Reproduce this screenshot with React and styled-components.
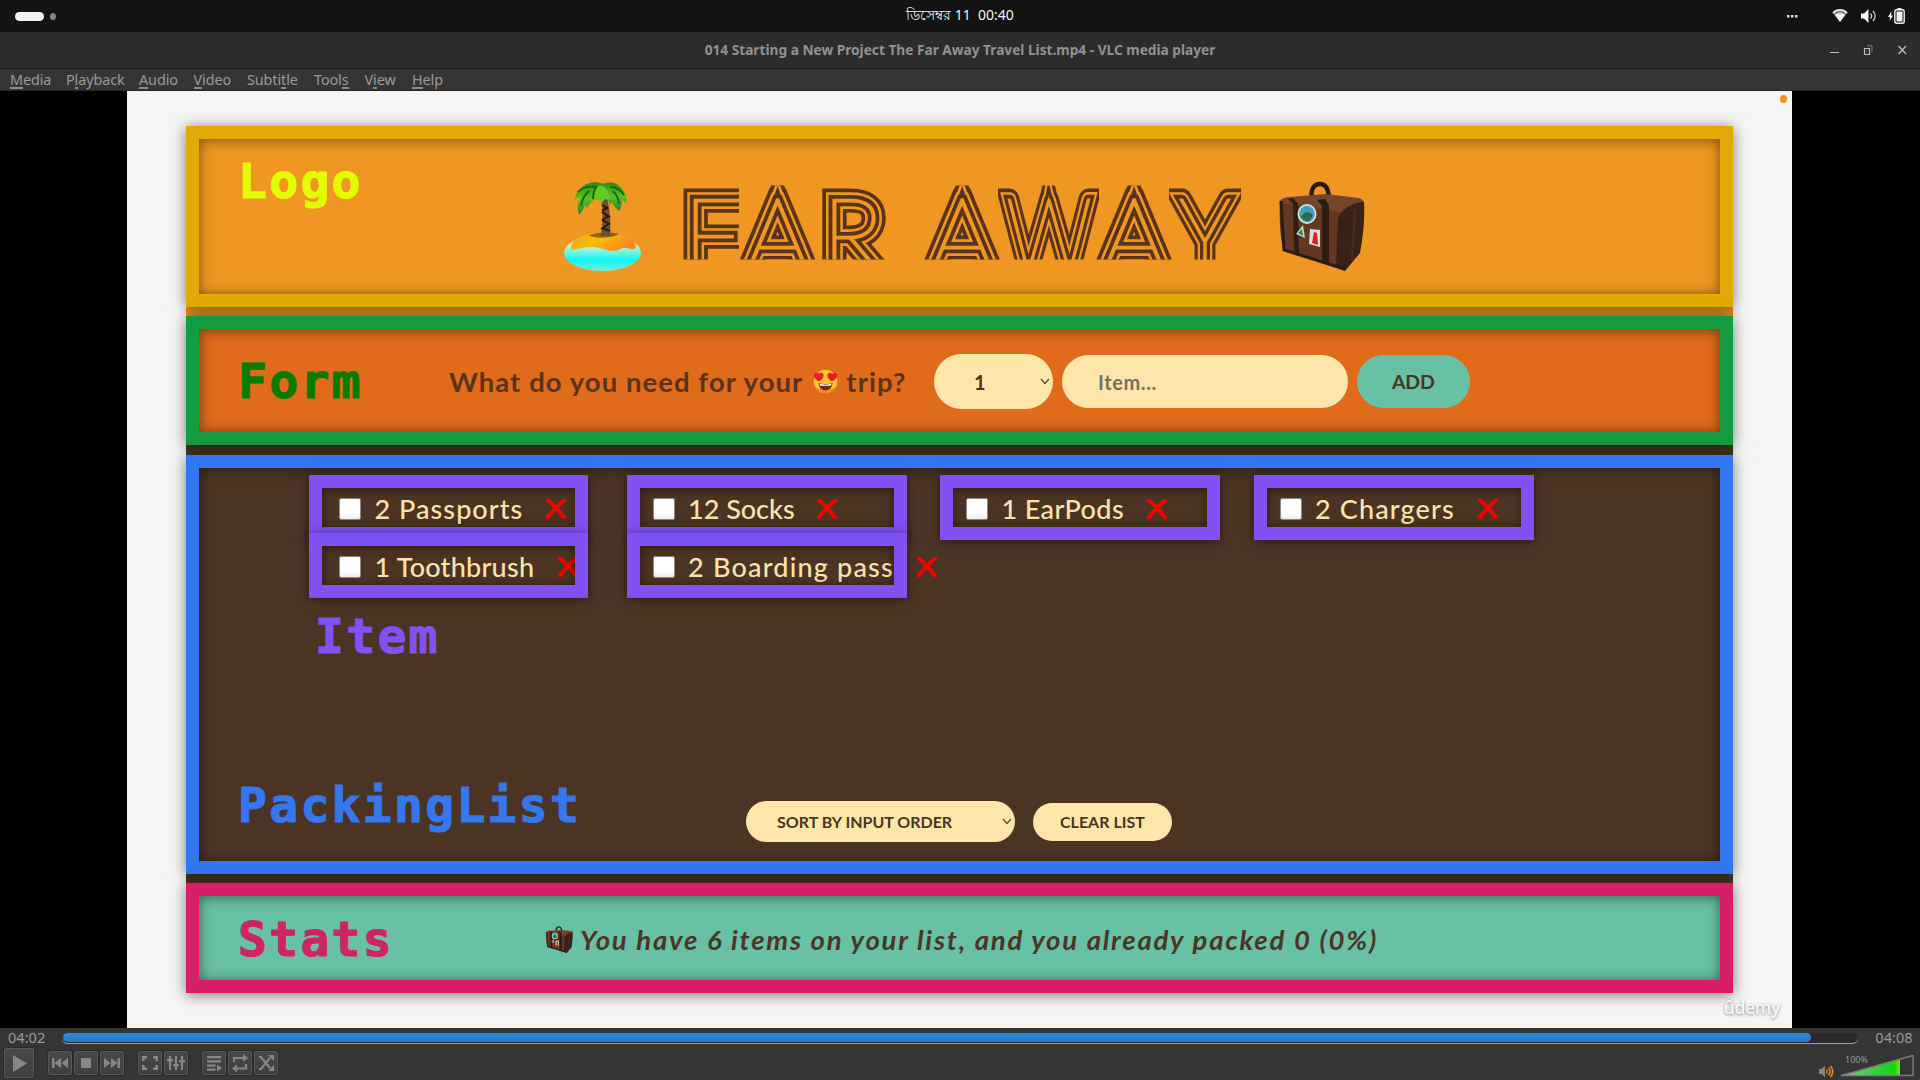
import React from "react";
import styled, { createGlobalStyle } from "styled-components";

const brown = "#4c3424";
const cream = "#fee6aa";

const Global = createGlobalStyle`
  * { box-sizing: border-box; }
  html, body { margin: 0; padding: 0; background: #000; overflow: hidden; }
  svg { display: block; flex: none; }
`;

const Screen = styled.div`
  width: 1920px;
  height: 1080px;
  display: flex;
  flex-direction: column;
  overflow: hidden;
  font-family: "Noto Sans", "Open Sans", sans-serif;
`;

/* ---------- desktop bars ---------- */

const BarGrid = styled.header`
  display: grid;
  grid-template-columns: 1fr auto 1fr;
  align-items: center;
`;

const TopBar = styled(BarGrid)`
  flex: 0 0 32px;
  padding: 0 15px;
  background: #131313;
  color: #f2f2f2;
  font-size: 14px;
`;

const Workspaces = styled.div`
  display: flex;
  align-items: center;
  gap: 6px;
`;

const Pill = styled.i`
  width: 29px;
  height: 9px;
  border-radius: 5px;
  background: #f2f2f2;
`;

const Dot = styled.i`
  width: 6px;
  height: 7px;
  border-radius: 50%;
  background: #858585;
`;

const Clock = styled.div`
  white-space: pre;
  line-height: 20px;
  padding-bottom: 2px;
`;

const Tray = styled.div`
  display: flex;
  align-items: center;
  justify-content: flex-end;
`;

const TrayItem = styled.span`
  margin-left: ${(p) => p.$gap || 0}px;
`;

const TitleBar = styled(BarGrid)`
  flex: 0 0 37px;
  padding: 0 13px;
  background: #2c2c2c;
  border-bottom: 1px solid #191919;
  color: #929292;
`;

const Title = styled.h1`
  grid-column: 2;
  margin: 0;
  font-size: 13.7px;
  line-height: 20px;
  font-weight: 700;
  white-space: nowrap;
`;

const MenuBar = styled.nav`
  flex: 0 0 22px;
  display: flex;
  padding-left: 10px;
  background: #353535;
  border-bottom: 1px solid #262626;
  color: #9a9a9a;
  font-size: 14.4px;
  line-height: 21px;
  letter-spacing: -0.1px;
`;

const MenuItem = styled.span`
  flex: 0 0 ${(p) => p.$w}px;
  white-space: nowrap;
  u {
    text-decoration: none;
    box-shadow: inset 0 -2px 0 #8d8d8d;
    display: inline-block;
    height: 20px;
  }
`;

/* ---------- video picture ---------- */

const Video = styled.main`
  flex: 0 0 937px;
  background: #000;
  display: flex;
  justify-content: center;
  padding-right: 1px;
`;

const Slide = styled.div`
  position: relative;
  width: 1665px;
  background: #f5f5f5;
  padding: 35px 59px 0;
  font-family: Lato, "Open Sans", sans-serif;
`;

const OrangeDot = styled.i`
  position: absolute;
  top: 4px;
  right: 5px;
  width: 7px;
  height: 8px;
  border-radius: 50%;
  background: #f59518;
`;

const Watermark = styled.div`
  position: absolute;
  right: 12px;
  bottom: 9px;
  font: 600 17.5px/24px "Open Sans", sans-serif;
  letter-spacing: -0.4px;
  color: #f8f8f8;
  text-shadow: 0 1px 3px rgba(0, 0, 0, 0.45);
`;

const AppBoard = styled.div`
  width: 1547px;
  display: flex;
  flex-direction: column;
  gap: 9px;
  background: linear-gradient(#ef9722 0 195px, ${brown} 195px);
`;

const Section = styled.section`
  position: relative;
  height: ${(p) => p.$h}px;
  margin-bottom: ${(p) => p.$mb || 0}px;
  border: 13px solid ${(p) => p.$line};
  background: ${(p) => p.$bg};
  box-shadow: 0 2px 14px rgba(0, 0, 0, 0.5), inset 0 1px 13px rgba(0, 0, 0, 0.5);
  display: flex;
  flex-direction: ${(p) => (p.$column ? "column" : "row")};
  align-items: ${(p) => (p.$column ? "stretch" : "center")};
  padding-top: ${(p) => p.$pt || 0}px;
  padding-left: ${(p) => (p.$column ? 0 : 39)}px;
`;

const Tag = styled.h2`
  margin: ${(p) => p.$m || "0"};
  flex: 0 0 auto;
  width: ${(p) => p.$w}px;
  align-self: ${(p) => p.$align || "auto"};
  font: 700 48px/56px "DejaVu Sans Mono", monospace;
  letter-spacing: 2.3px;
  color: ${(p) => p.$color};
  -webkit-text-stroke: 1.1px ${(p) => p.$color};
`;

const Brand = styled.div`
  display: flex;
  align-items: center;
  margin-top: 19px;
`;

/* Inline-striped display lettering: concentric strokes over a hairline glyph. */
const Wordmark = styled.div`
  display: flex;
  margin: -7px 40px 0 42px;
  font: 100 104px/93px Lato, sans-serif;
  color: #59341a;
`;

const Glyph = styled.span`
  display: block;
  width: 100%;
  -webkit-text-stroke: 23px #59341a;
  &::after {
    content: attr(data-c);
    position: absolute;
    inset: 0;
    z-index: 1;
    color: #ef9722;
    -webkit-text-stroke: 15.6px #ef9722;
  }
`;

const Letter = styled.span`
  position: relative;
  display: flex;
  justify-content: center;
  text-align: center;
  height: 74px;
  width: ${(p) => p.$w}px;
  margin-left: ${(p) => p.$ml || 0}px;
  clip-path: inset(0 ${(p) => p.$cut ?? -14}px 0 -14px);
  white-space: nowrap;
  text-indent: ${(p) => p.$nudge || 0}px;
  transform: scaleX(${(p) => p.$sx || 1});
  &::before,
  &::after {
    content: attr(data-c);
    position: absolute;
    inset: 0;
  }
  &::before {
    z-index: 2;
    -webkit-text-stroke: 10.4px #59341a;
  }
  &::after {
    z-index: 3;
    color: #ef9722;
    -webkit-text-stroke: 2.8px #ef9722;
  }
`;

const Question = styled.div`
  display: flex;
  align-items: center;
  width: 485px;
  color: #5a3419;
  font-size: 27.5px;
  font-weight: 700;
  letter-spacing: 1.05px;
  white-space: nowrap;
  svg { margin: 0 8px 0 10px; }
`;

const Control = styled.div`
  display: flex;
  align-items: center;
  justify-content: space-between;
  width: ${(p) => p.$w}px;
  height: ${(p) => p.$h}px;
  margin-left: ${(p) => p.$ml || 0}px;
  padding: 0 ${(p) => p.$pr || 0}px 0 ${(p) => p.$pl || 0}px;
  border-radius: ${(p) => p.$h / 2}px;
  background: ${(p) => p.$bg || cream};
  color: ${(p) => p.$color || brown};
  font-size: ${(p) => p.$size}px;
  font-weight: 700;
  letter-spacing: ${(p) => p.$ls || 0}px;
  white-space: nowrap;
`;

const Items = styled.ul`
  list-style: none;
  margin: 7px 0 0 110px;
  padding: 0;
  display: grid;
  grid-template-columns: 317.5px 313.5px 313.5px 280px;
  grid-auto-rows: 58px;
`;

const Item = styled.li`
  position: relative;
  width: 280px;
  height: 65px;
  padding: 3px 0 0 26px;
  &:nth-child(4n + 1) {
    width: 279px;
    padding-left: 30px;
  }
  display: flex;
  align-items: center;
  color: #fbe3ac;
  font-size: 27px;
  font-weight: 500;
  letter-spacing: ${(p) => p.$ls}px;
  white-space: nowrap;
  &::after {
    content: "";
    position: absolute;
    inset: 0;
    border: 13px solid #7f52f4;
    box-shadow: 0 1px 10px rgba(0, 0, 0, 0.5), inset 0 1px 10px rgba(0, 0, 0, 0.5);
  }
`;

const Box = styled.i`
  flex: 0 0 22px;
  height: 22px;
  margin-right: 13.5px;
  border: 1px solid #8c8a88;
  border-radius: 2px;
  background: linear-gradient(#fff, #fff 70%, #ececec);
`;

const Name = styled.span`
  flex: 0 0 ${(p) => p.$w}px;
  margin: -2px 22px 0 0;
`;

const Footer = styled.div`
  margin-top: auto;
  height: 84.5px;
  display: flex;
  align-items: flex-start;
  padding-left: 39px;
`;

const Actions = styled.div`
  display: flex;
  align-items: center;
  margin-top: 24.5px;
`;

const Summary = styled.div`
  display: flex;
  align-items: center;
  gap: 7px;
  color: #4a3626;
  font-size: 27.5px;
  font-style: italic;
  font-weight: 700;
  letter-spacing: 1.77px;
  white-space: nowrap;
`;

/* ---------- player controls ---------- */

const Player = styled.footer`
  flex: 1;
  background: #353535;
  color: #9b9b9b;
  display: flex;
  flex-direction: column;
`;

const SeekRow = styled.div`
  height: 19px;
  display: flex;
  align-items: center;
  justify-content: space-between;
  padding: 0 9px 0 8px;
  font-size: 14.6px;
  line-height: 19px;
`;

const Groove = styled.div`
  width: 1796px;
  height: 10px;
  margin: 0 17px;
  flex: none;
  border-radius: 5px;
  background: #2a2a2a;
  box-shadow: 0 1px 0 #a0a0a0;
`;

const Fill = styled.div`
  width: 1748px;
  height: 9px;
  margin-left: 1px;
  border-radius: 5px;
  background: linear-gradient(#2f8ade, #2378c9);
`;

const Buttons = styled.div`
  display: flex;
  align-items: center;
  padding: 1px 6px 1px 4px;
  height: 32px;
`;

const Key = styled.span`
  width: ${(p) => (p.$big ? 30 : 24)}px;
  height: ${(p) => (p.$big ? 30 : 24)}px;
  margin-left: ${(p) => p.$ml ?? 2}px;
  display: flex;
  align-items: center;
  justify-content: center;
  border: 1px solid #575757;
  border-radius: 2px;
  box-shadow: 0 0 0 1px #2a2a2a;
  background: linear-gradient(#484848, #3f3f3f);
`;

const Volume = styled.div`
  display: flex;
  align-items: flex-end;
  align-self: flex-end;
  margin-left: auto;
  height: 24px;
`;

const VolumeMeter = styled.div`
  position: relative;
  width: 74px;
  height: 24px;
  margin: 0 0 1px 6px;
`;

const Percent = styled.span`
  position: absolute;
  left: 5px;
  top: 1px;
  font-size: 9px;
  line-height: 12px;
`;

/* ---------- drawings ---------- */

const Palm = () => (
  <svg width="78" height="91" viewBox="0 0 78 91">
    <defs>
      <linearGradient id="sea" x1="0" y1="0" x2="0" y2="1">
        <stop offset="0" stopColor="#fff" />
        <stop offset=".35" stopColor="#a9f5d6" />
        <stop offset=".7" stopColor="#0ff6f8" />
        <stop offset="1" stopColor="#7fe8d8" />
      </linearGradient>
      <linearGradient id="sand" x1="0" y1="0" x2="1" y2=".4">
        <stop offset="0" stopColor="#f0a81b" />
        <stop offset=".5" stopColor="#fbb908" />
        <stop offset="1" stopColor="#f58a24" />
      </linearGradient>
      <linearGradient id="leafA" x1="0" y1="0" x2="0" y2="1">
        <stop offset="0" stopColor="#2f8a12" />
        <stop offset=".5" stopColor="#58c41c" />
        <stop offset="1" stopColor="#2b7a3c" />
      </linearGradient>
    </defs>
    <ellipse cx="38.500" cy="72" rx="38.500" ry="18" fill="url(#sea)" />
    <path d="M7 67C8 55 24 52 39 52s31 3 33 14c-2 4-5 2-9 1-5-1-8 3-14 3-8 0-12-4-20-4-9-.500-12 1-16 2-4 1-6 1-6-1Z" fill="url(#sand)" />
    <path d="M25 54.500c6-3 20-4 30-1.500-6 4-24 5-30 1.500Z" fill="#6b4a10" opacity=".75" />
    <path d="M37 17h6c3 12 4 24 3 38h-9c2-13 2-26 0-38Z" fill="#6e4c33" />
    <path d="m38 24 6 4m-6 3 8 5m-8 3 8 4m-8 4 8 3m-2-24-6 4m7 5-7 4m7 4-8 5" stroke="#23150b" strokeWidth="1.600" fill="none" />
    <path d="M39 3C29-2 13 3 10 20c3-3 5-4 7-4-4 5-4 11-2 18 3-3 5-7 6-10l2 3c3-6 8-8 12-13 2-4 4-7 4-11Z" fill="url(#leafA)" />
    <path d="M38 3c12-5 24 2 25 19-2-1-3-2-5-3 0 5-1 8-3 11-3-3-6-6-7-9l-2 3c-2-6-6-10-8-21Z" fill="url(#leafA)" />
    <path d="M34 5c7-2 12 5 11 14l-4-1-3 4-3-3-4 0c-2-5-1-11 3-14Z" fill="#63cb24" />
    <path d="M14 11c6-6 13-6 19-5M46 6c6 0 11 3 14 8M25 10c-5 4-7 9-8 15M49 10c4 4 6 8 6 13M33 5c-3 4-4 9-4 13" stroke="#17650f" strokeWidth="1.800" fill="none" />
  </svg>
);

const Suitcase = ({ w = 86, h = 90 }) => (
  <svg width={w} height={h} viewBox="0 0 86 90" preserveAspectRatio="none">
    <path d="M33 20c-2-12 2-17 8-17s9 6 9 17" fill="none" stroke="#2b1a12" strokeWidth="4.500" />
    <path d="M1 20 62 30l4 60L4 69C1 54 0 36 1 20Z" fill="#633720" />
    <path d="M1 20c2-3 6-4 10-4l36-3 33 4c4 1 6 4 5 8L66 32 2 22Z" fill="#74452b" />
    <path d="M85 21c1 18-1 34-4 51L66 90l-9-4 2-48c2-10 16-17 26-17Z" fill="#3a2115" />
    <path d="m14 17 5 6 1 52-5-2-1-50-5-5Zm32 1 4 6v59l-7-3V25l-5-6Z" fill="#2f1c14" />
    <path d="m2 20 3 49 61 19" fill="none" stroke="#2c1a13" strokeWidth="3" />
    <path d="m76 28-3 52" stroke="#4b2a1b" strokeWidth="2.500" />
    <ellipse cx="28" cy="33" rx="9.500" ry="10" fill="#d7e6d2" />
    <ellipse cx="28" cy="33" rx="7.800" ry="8.300" fill="#3f9fc2" />
    <path d="M22 36c3-6 8-6 12-2l-3 6c-4 1-7-1-9-4Z" fill="#2f6a4a" />
    <path d="m24 44 2 13-9-4Z" fill="#b9dcc2" />
    <path d="m23 48 1 7-5-3Z" fill="#1f8a4f" />
    <path d="m31 48 10 1v17l-11-3Z" fill="#d9dfdf" />
    <path d="m35 51 3 1 1 12-6-2Z" fill="#cf2327" />
  </svg>
);

const HeartEyes = () => (
  <svg width="25" height="25" viewBox="0 0 25 25">
    <circle cx="12.500" cy="12.500" r="11.800" fill="#fdc42c" />
    <path d="M1.500 16.500a11.800 11.800 0 0 0 22 0c-3 6-19 6-22 0Z" fill="#f08f16" />
    <path d="M5.500 14c4 1.500 10 1.500 14 0-.6 4.800-3 7.300-7 7.300s-6.400-2.500-7-7.300Z" fill="#7a2a12" />
    <path d="M6.400 14.800c4 1.100 8.200 1.100 12.200 0l-.5 2H6.900Z" fill="#fff" />
    <path d="M6 12.500C2 10.500.2 8 .8 5.600 1.500 3.300 4.300 3 5.600 5c1.700-2.200 5-1.500 5 1.200 0 2.500-2 4.800-4.600 6.300Z" fill="#ea1c24" />
    <path d="M19 12.500c4-2 5.800-4.500 5.200-6.900-.7-2.300-3.500-2.600-4.800-.6-1.700-2.200-5-1.500-5 1.200 0 2.500 2 4.800 4.600 6.300Z" fill="#ea1c24" />
  </svg>
);

const Cross = () => (
  <svg width="20" height="20" viewBox="0 0 20 20">
    <path d="M2 1.500C7 5.500 13 12 18 18.500M18 1.500C13 6 6 13 1.800 18.500" stroke="#f90000" strokeWidth="3.900" strokeLinecap="round" fill="none" />
  </svg>
);

const Chevron = () => (
  <svg width="10" height="7" viewBox="0 0 10 7">
    <path d="m1 1 4 4.500L9 1" fill="none" stroke="#5e4a30" strokeWidth="1.300" />
  </svg>
);

const glyphs = {
  play: <path d="M8 6v17l14-8.500Z" />,
  prev: <path d="M3 6h2.500v10H3ZM12 6v10l-6.500-5ZM19 6v10l-6.500-5Z" />,
  stop: <path d="M6 6h10v10H6Z" />,
  next: <path d="M19 6h-2.500v10H19ZM10 6v10l6.500-5ZM3 6v10l6.500-5Z" />,
  full: <path d="M3 4h5v2.500H5.500V9H3ZM14 4h5v5h-2.500V6.500H14ZM3 13h2.500v2.500H8V18H3ZM16.500 13H19v5h-5v-2.500h2.500Z" />,
  ext: <path d="M4 4h2v3h2v2.500H6V18H4V9.500H2V7h2ZM10 4h2v8h2v2.500h-2V18h-2v-3.500H8V12h2ZM16 4h2v4h2v2.500h-2V18h-2v-7.500h-2V8h2Z" />,
  list: <path d="M4 4h14v2.200H4ZM4 8.300h14v2.200H4ZM4 12.500h8.500v2.200H4ZM4 16.600h8.500v2.200H4ZM14 12.500v7l5-3.500Z" />,
};

const KeyIcon = ({ name, size = 22 }) => (
  <svg width={size} height={size} viewBox={`0 0 ${size} ${size}`} fill="#878787">
    {glyphs[name]}
  </svg>
);

const LineIcon = ({ d, heads }) => (
  <svg width="22" height="22" viewBox="0 0 22 22" fill="none" stroke="#878787" strokeWidth="2.200">
    <path d={d} />
    <path d={heads} fill="#878787" stroke="none" />
  </svg>
);

const menu = [
  ["", "M", "edia", 56], ["P", "l", "ayback", 73], ["", "A", "udio", 54.500], ["", "V", "ideo", 53.500],
  ["Subti", "t", "le", 67], ["Tool", "s", "", 50.500], ["V", "i", "ew", 47.500], ["", "H", "elp", 40],
];

const letters = [
  { c: "F", w: 54, cut: -1, nudge: -1 },
  { c: "A", w: 81, ml: -1 },
  { c: "R", w: 71, nudge: -2 },
  { c: "A", w: 82, ml: 32 },
  { c: "W", w: 102, ml: -6, sx: 0.82 },
  { c: "A", w: 82, ml: -6 },
  { c: "Y", w: 68, ml: -4, sx: 0.86 },
];

const items = [
  ["2 Passports", 149, 1.05], ["12 Socks", 107, 0], ["1 EarPods", 123.5, 0.4],
  ["2 Chargers", 140.5, 1.15], ["1 Toothbrush", 161, 0.25], ["2 Boarding pass", 206.5, 1.2],
];

export default function App() {
  return (
    <Screen>
      <Global />
      <TopBar>
        <Workspaces><Pill /><Dot /></Workspaces>
        <Clock>{"ডিসেম্বর 11  00:40"}</Clock>
        <Tray>
          <svg width="11" height="3" fill="#ddd"><path d="M0 0h2.500v2.500H0ZM4 0h2.500v2.500H4ZM8 0h2.500v2.500H8Z" /></svg>
          <TrayItem $gap={34}>
            <svg width="16" height="14" viewBox="0 0 16 14">
              <path d="M.8 4C5-.2 11-.2 15.200 4L8 13Z" fill="#8d8d8d" />
              <path d="M.8 4C5-.2 11-.2 15.200 4" fill="none" stroke="#f2f2f2" strokeWidth="1.500" />
              <path d="M3 6c3-2.500 7-2.500 10 0l-5 7Z" fill="#f4f4f4" />
            </svg>
          </TrayItem>
          <TrayItem $gap={13}>
            <svg width="15" height="14" viewBox="0 0 15 14" fill="none" stroke="#c8c8c8" strokeWidth="1.300">
              <path d="M0 4.500h3L7.500 0v14L3 9.500H0Z" fill="#f4f4f4" stroke="none" />
              <path d="M9.500 4.500c1.400 1.500 1.400 3.500 0 5M12 2c2.600 3 2.600 7 0 10" />
            </svg>
          </TrayItem>
          <TrayItem $gap={12}>
            <svg width="17" height="16" viewBox="0 0 17 16">
              <path d="M3.500 3 0 9h2l-.5 4L5 7.500H3Z" fill="#f2f2f2" />
              <path d="M9.500 0h4v2h-4Z" fill="#f2f2f2" />
              <rect x="6.800" y="1.800" width="9.400" height="13.400" rx="2" fill="none" stroke="#f2f2f2" strokeWidth="1.400" />
              <path d="M8.500 3.500h6v10h-6Z" fill="#f2f2f2" />
            </svg>
          </TrayItem>
        </Tray>
      </TopBar>

      <TitleBar>
        <Title>014 Starting a New Project The Far Away Travel List.mp4 - VLC media player</Title>
        <Tray>
          <svg width="77" height="10" viewBox="0 0 77 10" fill="none" stroke="#bdbdbd">
            <path d="M0 7.500h9" />
            <path d="M34.500 3.500h5v6h-5Z" strokeWidth="1.200" />
            <path d="M37 .8h5v6.500" stroke="#858585" />
            <path d="m68.500 1 7.500 8M76 1l-7.500 8" strokeWidth="1.300" />
          </svg>
        </Tray>
      </TitleBar>

      <MenuBar>
        {menu.map(([a, k, b, w]) => (
          <MenuItem key={a + k + b} $w={w}>{a}<u>{k}</u>{b}</MenuItem>
        ))}
      </MenuBar>

      <Video>
        <Slide>
          <OrangeDot />
          <AppBoard>
            <Section $h={181} $line="#e2aa05" $bg="#ef9722">
              <Tag $w={326} $color="#e2ff00" $align="flex-start" $m="13.5px 0 0">Logo</Tag>
              <Brand>
                <Palm />
                <Wordmark>
                  {letters.map((l, i) => (
                    <Letter key={i} data-c={l.c} $w={l.w} $ml={l.ml} $sx={l.sx} $cut={l.cut} $nudge={l.nudge}>
                      <Glyph data-c={l.c}>{l.c}</Glyph>
                    </Letter>
                  ))}
                </Wordmark>
                <Suitcase />
              </Brand>
            </Section>

            <Section $h={129} $mb={1} $pt={2} $line="#159b42" $bg="#df6b1b">
              <Tag $w={211} $m="-2px 0 0" $color="#067c02">Form</Tag>
              <Question>
                What do you need for your <HeartEyes /> trip?
              </Question>
              <Control $w={119} $h={55} $size={20} $pl={40} $pr={3}>1<Chevron /></Control>
              <Control $w={286} $h={53} $ml={9} $size={20} $pl={36} $ls={0.6} $color="#77705f">Item...</Control>
              <Control $w={113} $h={53} $ml={9} $size={19.5} $pl={35} $ls={-0.2} $bg="#69c1a5">ADD</Control>
            </Section>

            <Section $h={419} $line="#3277f0" $bg={brown} $column>
              <Items>
                {items.map(([name, w, ls]) => (
                  <Item key={name} $ls={ls}>
                    <Box />
                    <Name $w={w}>{name}</Name>
                    <Cross />
                  </Item>
                ))}
              </Items>
              <Tag $color="#7f52f4" $m="17px 0 0 116px">Item</Tag>
              <Footer>
                <Tag $w={508} $color="#3577ee">PackingList</Tag>
                <Actions>
                  <Control $w={269} $h={41} $size={16} $pl={31} $pr={3}>SORT BY INPUT ORDER<Chevron /></Control>
                  <Control $w={139} $h={38} $ml={18} $size={16} $pl={27}>CLEAR LIST</Control>
                </Actions>
              </Footer>
            </Section>

            <Section $h={110} $pt={2} $line="#d81e69" $bg="#69c1a5">
              <Tag $w={308} $color="#cf2463">Stats</Tag>
              <Summary>
                <Suitcase w={27} h={27} />
                You have 6 items on your list, and you already packed 0 (0%)
              </Summary>
            </Section>
          </AppBoard>
          <Watermark>ûdemy</Watermark>
        </Slide>
      </Video>

      <Player>
        <SeekRow>
          <span>04:02</span>
          <Groove><Fill /></Groove>
          <span>04:08</span>
        </SeekRow>
        <Buttons>
          <Key $big $ml={0}><KeyIcon name="play" size={28} /></Key>
          <Key $ml={14}><KeyIcon name="prev" /></Key>
          <Key><KeyIcon name="stop" /></Key>
          <Key><KeyIcon name="next" /></Key>
          <Key $ml={14}><KeyIcon name="full" /></Key>
          <Key><KeyIcon name="ext" /></Key>
          <Key $ml={14}><KeyIcon name="list" /></Key>
          <Key><LineIcon d="M5 10V6h10M17 12v4.500H7" heads="M14 2v8l5-4ZM8 12.500v8l-5-4Z" /></Key>
          <Key><LineIcon d="M4 5h2l9 11M4 17h2L15 6" heads="M13 3h6v6ZM19 13v6h-6Z" /></Key>
          <Volume>
            <svg width="15" height="13" viewBox="0 0 15 13" fill="none" stroke="#f08a12" strokeWidth="1.500">
              <path d="M0 4h2.500L6 .5v12L2.500 9H0Z" fill="#858585" stroke="none" />
              <path d="M7.500 4.500c.9 1.200.9 2.800 0 4M9.500 2.800c2 2.200 2 5.200 0 7.400M11.500 1c3 3.200 3 7.800 0 11" />
            </svg>
            <VolumeMeter>
              <svg width="74" height="24" viewBox="0 0 74 24">
                <defs>
                  <linearGradient id="vol">
                    <stop offset="0" stopColor="#7fc87f" />
                    <stop offset=".9" stopColor="#12d412" />
                    <stop offset="1" stopColor="#8edb10" />
                  </linearGradient>
                </defs>
                <path d="M2 22.500 60 6.500v16Z" fill="url(#vol)" />
                <path d="M1.500 22.500 73 2.500v20Z" fill="none" stroke="#7d7d7d" strokeWidth="1.300" strokeLinejoin="round" />
              </svg>
              <Percent>100%</Percent>
            </VolumeMeter>
          </Volume>
        </Buttons>
      </Player>
    </Screen>
  );
}
